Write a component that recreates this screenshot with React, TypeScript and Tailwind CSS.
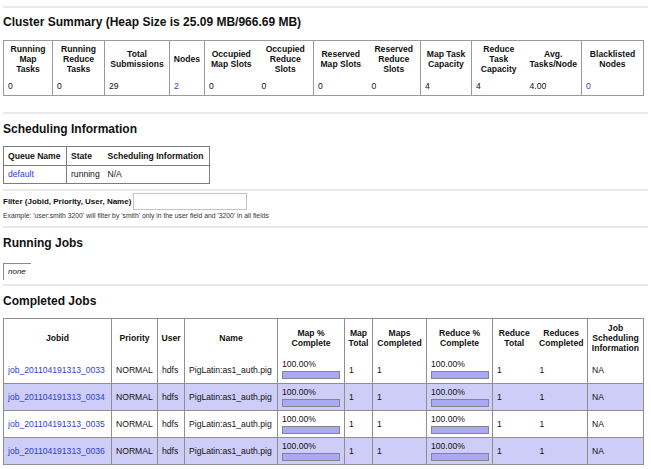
const clusterCols = [
  { w: 'w-[49px]', head: ['Running', 'Map', 'Tasks'], val: '0', link: false, line: false },
  { w: 'w-[52px]', head: ['Running', 'Reduce', 'Tasks'], val: '0', link: false, line: true },
  { w: 'w-[65px]', head: ['Total', 'Submissions'], val: '29', link: false, line: true },
  { w: 'w-[35px]', head: ['Nodes'], val: '2', link: true, line: true },
  { w: 'w-[53px]', head: ['Occupied', 'Map Slots'], val: '0', link: false, line: true },
  { w: 'w-[56px]', head: ['Occupied', 'Reduce', 'Slots'], val: '0', link: false, line: false },
  { w: 'w-[54px]', head: ['Reserved', 'Map Slots'], val: '0', link: false, line: true },
  { w: 'w-[53px]', head: ['Reserved', 'Reduce', 'Slots'], val: '0', link: false, line: false },
  { w: 'w-[51px]', head: ['Map Task', 'Capacity'], val: '4', link: false, line: true },
  { w: 'w-[54px]', head: ['Reduce', 'Task', 'Capacity'], val: '4', link: false, line: true },
  { w: 'w-[56px]', head: ['Avg.', 'Tasks/Node'], val: '4.00', link: false, line: false },
  { w: 'w-[62px]', head: ['Blacklisted', 'Nodes'], val: '0', link: true, line: true },
]

const jobCols = [
  { w: 'w-[108px]', head: ['Jobid'], line: false },
  { w: 'w-[46px]', head: ['Priority'], line: true },
  { w: 'w-[27px]', head: ['User'], line: true },
  { w: 'w-[93px]', head: ['Name'], line: true },
  { w: 'w-[67px]', head: ['Map %', 'Complete'], line: true },
  { w: 'w-[28px]', head: ['Map', 'Total'], line: true },
  { w: 'w-[54px]', head: ['Maps', 'Completed'], line: true },
  { w: 'w-[66px]', head: ['Reduce %', 'Complete'], line: true },
  { w: 'w-[43px]', head: ['Reduce', 'Total'], line: true },
  { w: 'w-[52px]', head: ['Reduces', 'Completed'], line: false },
  { w: 'w-[56px]', head: ['Job', 'Scheduling', 'Information'], line: true },
]

const jobs = ['0033', '0034', '0035', '0036']

function Rule() {
  return <div className="h-[2px] bg-[#e9e9e9]" />
}

function Lines({ parts }: { parts: string[] }) {
  return (
    <>
      {parts.map((p, i) => (
        <div key={i}>{p}</div>
      ))}
    </>
  )
}

function Progress() {
  return (
    <div>
      <div className="leading-[9px]">100.00%</div>
      <div className="mt-[2px] h-[8px] w-[58px] border border-[#858585] bg-[#a9a9f6]" />
    </div>
  )
}

export default function App() {
  return (
    <div className="min-h-screen bg-white px-[3px] pt-[6px] text-[8.6px] text-[#111] font-['Liberation_Sans',Arial,sans-serif]">
      <Rule />
      <h1 className="mt-[7px] text-[12px] leading-[14px] font-bold">Cluster Summary (Heap Size is 25.09 MB/966.69 MB)</h1>

      <table className="mt-[11px] table-fixed w-[640px] border border-[#9a9a9a]">
        <colgroup>
          {clusterCols.map((c, i) => (
            <col key={i} className={c.w} />
          ))}
        </colgroup>
        <tbody>
          <tr className="h-[36px]">
            {clusterCols.map((c, i) => (
              <th
                key={i}
                className={`px-[2px] text-center align-middle font-bold leading-[10px] whitespace-nowrap ${c.line ? 'border-l border-[#9a9a9a]' : ''}`}
              >
                <Lines parts={c.head} />
              </th>
            ))}
          </tr>
          <tr className="h-[19px]">
            {clusterCols.map((c, i) => (
              <td
                key={i}
                className={`pl-[4px] align-middle leading-[10px] ${c.line ? 'border-l border-[#9a9a9a]' : ''} ${c.link ? 'text-[#2b3fd6]' : ''}`}
              >
                {c.val}
              </td>
            ))}
          </tr>
        </tbody>
      </table>

      <div className="mt-[16px]">
        <Rule />
      </div>
      <h2 className="mt-[8px] text-[12px] leading-[14px] font-bold">Scheduling Information</h2>

      <table className="mt-[10px] table-fixed w-[206px] border border-[#7d7d7d]">
        <colgroup>
          <col className="w-[63px]" />
          <col className="w-[37px]" />
          <col className="w-[106px]" />
        </colgroup>
        <tbody>
          <tr className="h-[19px] border-b border-[#7d7d7d]">
            <th className="pl-[4px] text-left font-bold whitespace-nowrap">Queue Name</th>
            <th className="pl-[4px] text-left font-bold border-l border-[#7d7d7d]">State</th>
            <th className="pl-[4px] text-left font-bold whitespace-nowrap">Scheduling Information</th>
          </tr>
          <tr className="h-[18px]">
            <td className="pl-[4px] text-[#2b3fd6]">default</td>
            <td className="pl-[4px] border-l border-[#7d7d7d]">running</td>
            <td className="pl-[4px]">N/A</td>
          </tr>
        </tbody>
      </table>

      <div className="mt-[5px]">
        <Rule />
      </div>
      <div className="mt-[2px] flex items-center gap-[2px]">
        <span className="text-[8px] font-bold">Filter (Jobid, Priority, User, Name)</span>
        <input className="h-[17px] w-[114px] border border-[#c4c4c4] bg-white outline-none" />
      </div>
      <div className="mt-[2px] text-[6.8px] leading-[8px] text-[#333]">
        Example: 'user:smith 3200' will filter by 'smith' only in the user field and '3200' in all fields
      </div>

      <div className="mt-[6px]">
        <Rule />
      </div>
      <h2 className="mt-[8px] text-[12px] leading-[14px] font-bold">Running Jobs</h2>
      <div className="mt-[13px] flex h-[17px] w-[28px] items-center border-t border-l border-[#8a8a8a] pl-[4px] text-[8px] italic">
        none
      </div>

      <div className="mt-[4px]">
        <Rule />
      </div>
      <h2 className="mt-[8px] text-[12px] leading-[14px] font-bold">Completed Jobs</h2>

      <table className="mt-[10px] table-fixed w-[640px] border border-[#8f8f8f]">
        <colgroup>
          {jobCols.map((c, i) => (
            <col key={i} className={c.w} />
          ))}
        </colgroup>
        <tbody>
          <tr className="h-[38px]">
            {jobCols.map((c, i) => (
              <th
                key={i}
                className={`px-[2px] text-center align-middle font-bold leading-[10px] whitespace-nowrap ${c.line ? 'border-l border-[#8f8f8f]' : ''}`}
              >
                <Lines parts={c.head} />
              </th>
            ))}
          </tr>
          {jobs.map((j, r) => {
            const odd = r % 2 === 1
            const cells = [
              <span className="text-[#2b3fd6]">job_201104191313_{j}</span>,
              'NORMAL',
              'hdfs',
              'PigLatin:as1_auth.pig',
              <Progress />,
              '1',
              '1',
              <Progress />,
              '1',
              '1',
              'NA',
            ]
            return (
              <tr key={j} className={`h-[27px] ${r > 0 ? 'border-t border-[#8f8f8f]' : ''} ${odd ? 'bg-[#cdcdf8]' : 'bg-white'}`}>
                {cells.map((cell, i) => (
                  <td
                    key={i}
                    className={`px-[4px] align-middle whitespace-nowrap leading-[10px] ${jobCols[i].line ? 'border-l border-[#8f8f8f]' : ''}`}
                  >
                    {cell}
                  </td>
                ))}
              </tr>
            )
          })}
        </tbody>
      </table>
    </div>
  )
}
